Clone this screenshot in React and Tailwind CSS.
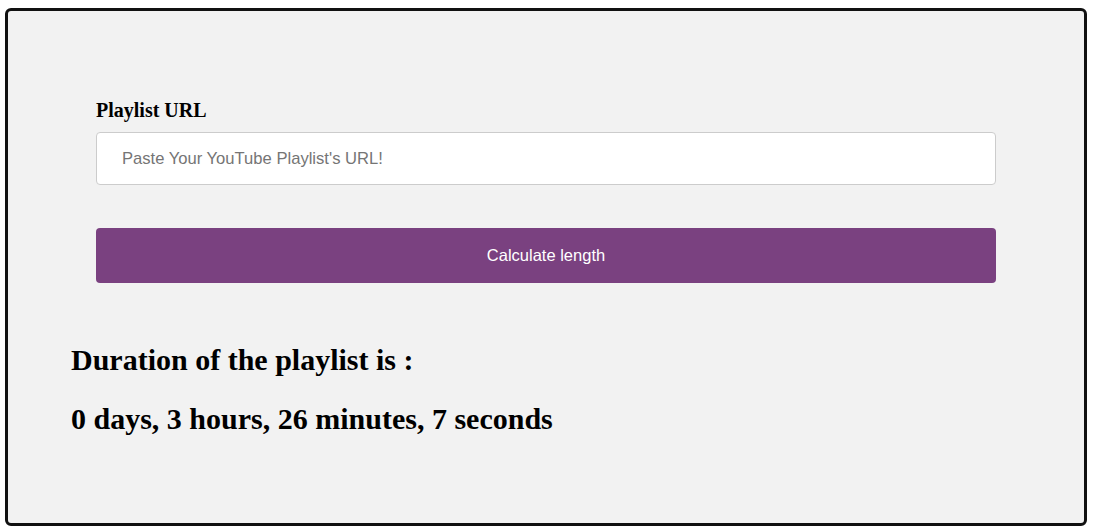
export default function App() {
  return (
    <div className="min-h-[527px] bg-white pt-2 pl-[5px] pr-[6px] pb-px">
      <div className="h-[518px] rounded-md border-[3px] border-[#111] bg-[#f2f2f2] pt-[87px] pl-[63px]">
        <div className="w-[900px] ml-[25px]">
          <label className="block font-['Liberation_Serif',serif] text-[20px] font-bold text-black leading-6">
            Playlist URL
          </label>
          <input
            type="text"
            placeholder="Paste Your YouTube Playlist's URL!"
            className="mt-[10px] block h-[53px] w-full rounded border border-[#ccc] bg-white px-[25px] font-['Liberation_Sans',sans-serif] text-[16.6px] text-black placeholder-[#757575] outline-none"
          />
          <button className="mt-[43px] block h-[55px] w-full rounded bg-[#7a4180] font-['Liberation_Sans',sans-serif] text-[16.5px] text-white">
            Calculate length
          </button>
        </div>
        <div className="mt-[60px] font-['Liberation_Serif',serif] font-bold text-black">
          <h2 className="text-[30px] leading-[34px]">Duration of the playlist is :</h2>
          <h2 className="mt-[25px] text-[30px] leading-[34px]">0 days, 3 hours, 26 minutes, 7 seconds</h2>
        </div>
      </div>
    </div>
  );
}
